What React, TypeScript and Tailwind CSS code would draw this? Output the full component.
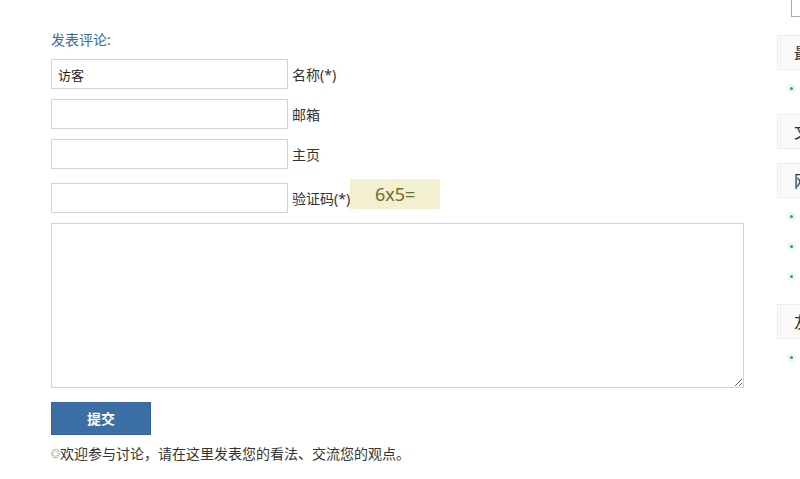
import React from "react";

const font = { fontFamily: '"Noto Sans", "Noto Sans CJK SC", sans-serif' };

const SideHeader = ({ title }: { title: string }) => (
  <div className="h-[35px] border border-[#ececec] bg-[#fafafa] p-[2px]">
    <div className="flex h-full items-center border-l border-[#f0f0f0] pl-[13px] text-[16px] leading-none text-[#333] whitespace-nowrap">
      {title}
    </div>
  </div>
);

const SideItem = ({ text }: { text: string }) => (
  <li className="flex h-[30px] items-center pl-[10px] text-[13px] text-[#333] whitespace-nowrap">
    <span className="mr-2 flex h-[9px] w-[9px] items-center justify-center rounded-full bg-[#eef6f5]">
      <span className="h-[3px] w-[3px] rounded-full bg-[#4a8f8a]" />
    </span>
    {text}
  </li>
);

const Field = ({ label, value }: { label: string; value?: string }) => (
  <div className="flex items-center">
    <input
      type="text"
      defaultValue={value}
      className="h-[30px] w-[237px] border border-[#d3d3d3] px-[6px] text-[13px] text-[#222] outline-none"
    />
    <span className="ml-[4px] text-[14px] text-[#333]">{label}</span>
  </div>
);

export default function App() {
  return (
    <div className="flex h-[479px] w-[800px] overflow-hidden bg-white" style={font}>
      {/* Comment form */}
      <div className="w-[693px] shrink-0 ml-[51px] pt-[30px]">
        <div className="h-[20px] text-[14px] leading-[20px] text-[#3b6b9b]">发表评论:</div>
        <div className="mt-[9px] flex flex-col gap-[10px]">
          <Field label="名称(*)" value="访客" />
          <Field label="邮箱" />
          <Field label="主页" />
        </div>
        <div className="mt-[10px] flex items-start">
          <div className="mt-[4px]">
            <Field label="验证码(*)" />
          </div>
          <div className="flex h-[30px] w-[90px] items-center justify-center bg-[#f2f0d0] text-[18px] text-[#6e6e2e]">
            6x5=
          </div>
        </div>
        <textarea className="mt-[10px] block h-[165px] w-[693px] border border-[#d3d3d3] outline-none" />
        <button className="mt-[14px] h-[33px] w-[100px] border border-[#35659a] bg-[#3a6ea5] text-[14px] font-bold text-white">
          提交
        </button>
        <p className="mt-[9px] text-[14px] leading-[20px] text-[#333]">
          <span className="text-[9px] align-[2px]">◎</span>欢迎参与讨论，请在这里发表您的看法、交流您的观点。
        </p>
      </div>

      {/* Sidebar */}
      <div className="ml-[33px] w-[240px] shrink-0">
        <div className="ml-[14px] h-[17px] w-[200px] border border-t-0 border-[#aaa]" />
        <div className="mt-[18px]">
          <SideHeader title="最新评论" />
          <ul className="pt-[3px] pb-[11px]">
            <SideItem text="访客：很不错的文章" />
          </ul>
          <SideHeader title="文章归档" />
          <div className="h-[14px]" />
          <SideHeader title="网站分类" />
          <ul className="pt-[3px] pb-[13px]">
            <SideItem text="技术分享" />
            <SideItem text="生活随笔" />
            <SideItem text="资源下载" />
          </ul>
          <SideHeader title="友情链接" />
          <ul className="pt-[3px]">
            <SideItem text="友链示例" />
          </ul>
        </div>
      </div>
    </div>
  );
}
